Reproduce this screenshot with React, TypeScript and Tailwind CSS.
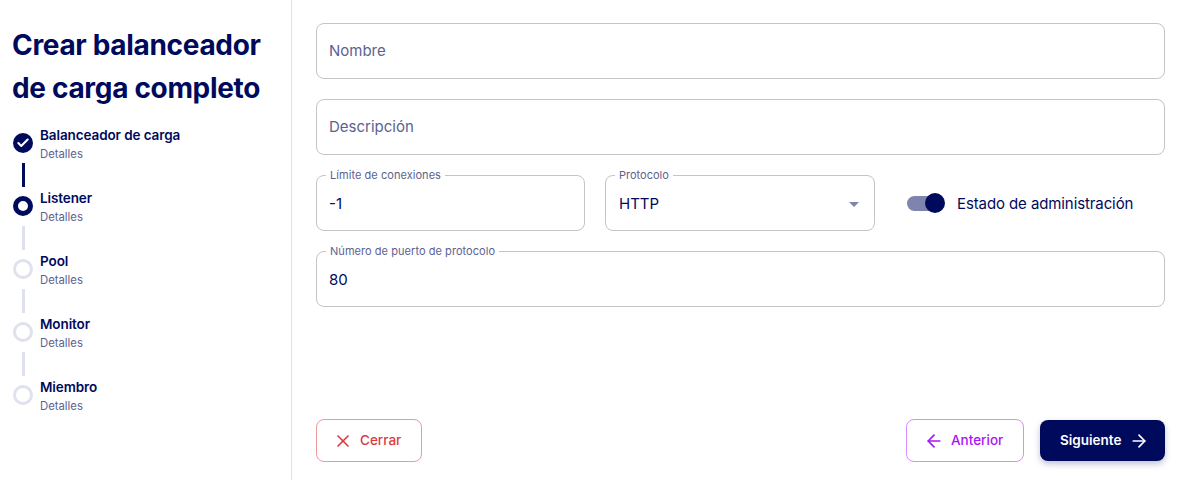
import React from 'react';
import { ArrowLeft, ArrowRight, Check, X } from 'lucide-react';

const steps = [
  { name: 'Balanceador de carga', state: 'done' },
  { name: 'Listener', state: 'active' },
  { name: 'Pool', state: 'todo' },
  { name: 'Monitor', state: 'todo' },
  { name: 'Miembro', state: 'todo' },
];

function StepDot({ state }: { state: string }) {
  if (state === 'done') {
    return (
      <div className="w-5 h-5 rounded-full bg-[#000a5c] flex items-center justify-center">
        <Check size={14} strokeWidth={3.5} className="text-white" />
      </div>
    );
  }
  if (state === 'active') {
    return <div className="w-5 h-5 rounded-full border-[5px] border-[#000a5c] bg-white" />;
  }
  return <div className="w-5 h-5 rounded-full border-[3px] border-[#e0e1ee] bg-white" />;
}

function Field({ label, value }: { label: string; value: string }) {
  return (
    <div className="relative h-14 rounded-lg border border-[#c4c4c4] px-3 pt-[2px] flex items-center">
      <span className="absolute -top-[8px] left-[9px] bg-white px-[4px] text-[11px] leading-[14px] tracking-[0.05px] text-[#5c6290]">{label}</span>
      <span className="text-[15px] text-[#000a5c]">{value}</span>
    </div>
  );
}

function EmptyField({ placeholder }: { placeholder: string }) {
  return (
    <div className="h-14 rounded-lg border border-[#c4c4c4] px-3 flex items-center">
      <span className="text-[15px] text-[#5c6290]">{placeholder}</span>
    </div>
  );
}

export default function App() {
  return (
    <div className="w-[1179px] h-[480px] flex bg-white overflow-hidden font-['Inter',sans-serif]">
      <aside className="w-[292px] shrink-0 border-r border-[#e0e1ee] pl-3 pt-[24px]">
        <h1 className="text-[28px] leading-[43px] font-bold text-[#000a5c] tracking-[-0.32px]">
          Crear balanceador
          <br />
          de carga completo
        </h1>
        <div className="mt-[15px] flex flex-col">
          {steps.map((step, i) => (
            <div key={step.name} className="flex">
              <div className="w-[22px] flex flex-col shrink-0 pl-[1px]">
                <div className="mt-[8px]">
                  <StepDot state={step.state} />
                </div>
                {i < steps.length - 1 && (
                  <div className={`ml-[9px] w-[3px] h-6 mt-[10px] mb-[1px] ${step.state === 'done' ? 'bg-[#000a5c]' : 'bg-[#e0e1ee]'}`} />
                )}
              </div>
              <div className="pl-[6px]">
                <div className="text-[13.5px] leading-[21px] font-semibold text-[#000a5c] tracking-[-0.1px]">{step.name}</div>
                <div className="text-[11.3px] leading-[16px] text-[#5c6290]">Detalles</div>
              </div>
            </div>
          ))}
        </div>
      </aside>

      <main className="flex-1 pl-6 pr-[14px] pt-[23px] pb-[18px] flex flex-col">
        <div className="flex flex-col gap-5">
          <EmptyField placeholder="Nombre" />
          <EmptyField placeholder="Descripción" />
          <div className="grid grid-cols-[269px_270px_1fr] gap-5">
            <Field label="Límite de conexiones" value="-1" />
            <div className="relative h-14 rounded-lg border border-[#c4c4c4] pl-[13px] pr-3 pt-[2px] flex items-center justify-between">
              <span className="absolute -top-[8px] left-[9px] bg-white px-[4px] text-[11px] leading-[14px] text-[#5c6290]">Protocolo</span>
              <span className="text-[15px] text-[#000a5c]">HTTP</span>
              <span className="mr-[3px] w-0 h-0 border-x-[5px] border-x-transparent border-t-[5px] border-t-[#7f84a9]" />
            </div>
            <div className="flex items-center pl-3 pt-[1px]">
              <div className="relative w-[34px] h-[15px] mr-4">
                <div className="w-[32px] h-[15px] rounded-full bg-[#7f84ad]" />
                <div className="absolute -top-[3px] left-[18px] w-5 h-5 rounded-full bg-[#000a5c]" />
              </div>
              <span className="pt-[1px] text-[15px] tracking-[-0.1px] text-[#000a5c] whitespace-nowrap">Estado de administración</span>
            </div>
          </div>
          <Field label="Número de puerto de protocolo" value="80" />
        </div>

        <div className="mt-auto flex items-center">
          <button className="w-[106px] h-[43px] rounded-lg border border-[#ec9a9e] pl-4 text-[13.5px] font-medium text-[#dc3a40] flex items-center gap-[7px]">
            <X size={20} strokeWidth={2} />
            Cerrar
          </button>
          <button className="ml-auto w-[118px] h-[43px] rounded-lg border border-[#d98cff] pl-[17px] text-[13.5px] font-medium text-[#a914f5] flex items-center gap-[7px]">
            <ArrowLeft size={20} strokeWidth={2} />
            Anterior
          </button>
          <button className="ml-4 w-[125px] h-[41px] rounded-lg bg-[#000a5c] pl-5 text-[13.5px] font-semibold text-white flex items-center gap-2 shadow-[0_3px_6px_rgba(0,10,92,0.25)]">
            Siguiente
            <ArrowRight size={20} strokeWidth={2} />
          </button>
        </div>
      </main>
    </div>
  );
}
